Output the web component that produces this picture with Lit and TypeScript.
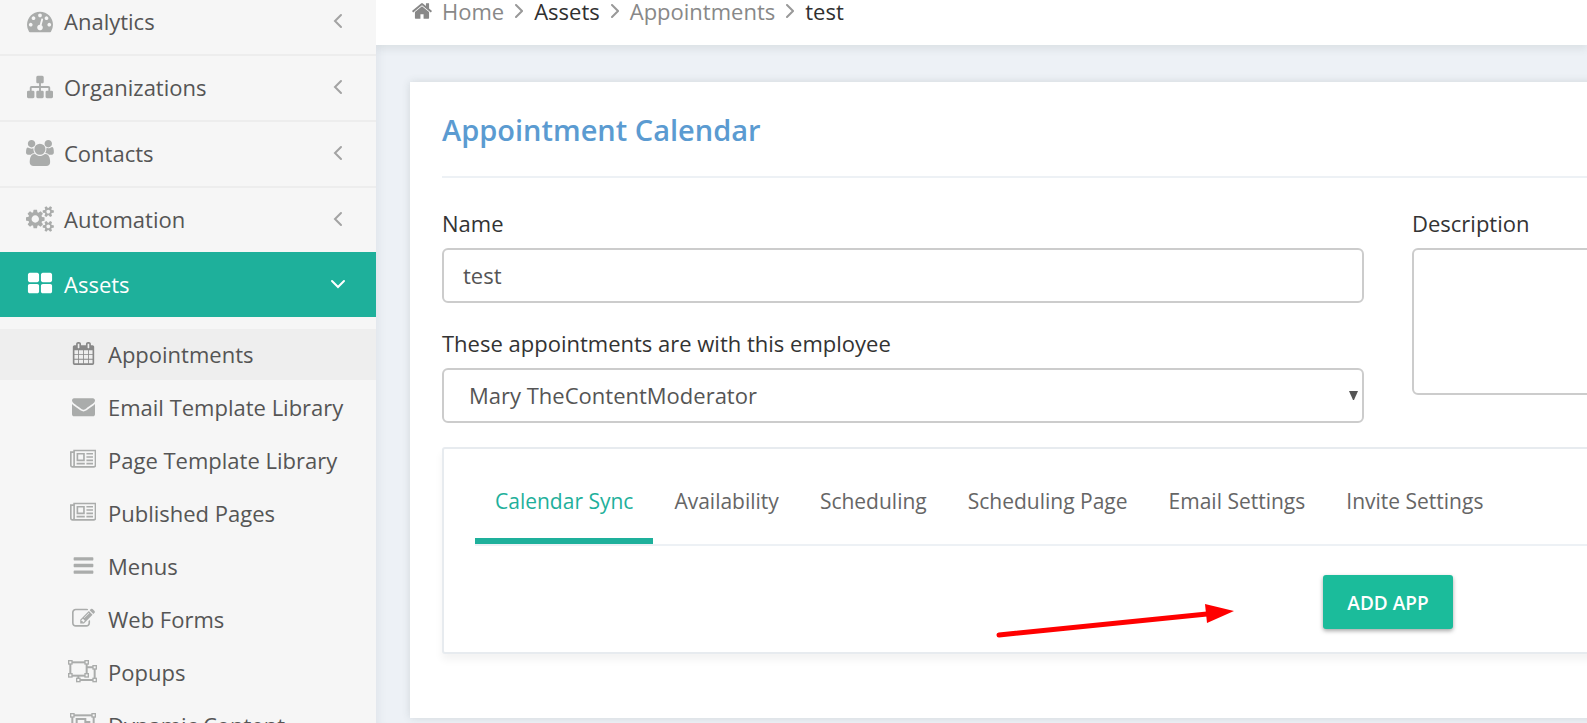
import { LitElement, html, svg, css, nothing, type SVGTemplateResult } from "lit";
import { customElement, property, state } from "lit/decorators.js";
import { classMap } from "lit/directives/class-map.js";

interface Glyph {
  width: number;
  height: number;
  size: number;
  body: SVGTemplateResult;
}

const solid = (size: number, d: string, unitsWide = 1792): Glyph => ({
  width: unitsWide,
  height: 1792,
  size,
  body: svg`<path fill="currentColor" fill-rule="nonzero" d=${d}></path>`,
});

const corner = (x: number, y: number) =>
  svg`<rect x=${x - 5} y=${y - 5} width="10" height="10" fill="#f6f6f6" stroke="currentColor" stroke-width="4"></rect>`;

const newspaper =
  "M1024 512h-384v384h384v-384zm128 640v128h-640v-128h640zm0-768v640h-640v-640h640zm640 768v128h-512v-128h512zm0-256v128h-512v-128h512zm0-256v128h-512v-128h512zm0-256v128h-512v-128h512zm-1536 960v-960h-128v960q0 26 19 45t45 19 45-19 19-45zm1664 0v-1088h-1536v1088q0 33-11 64h1483q26 0 45-19t19-45zm128-1216v1216q0 80-56 136t-136 56h-1664q-80 0-136-56t-56-136v-1088h256v-128h1792z";

const glyphs: Record<string, Glyph> = {
  home: solid(
    22,
    "M1472 992v480q0 26-19 45t-45 19h-384v-384h-256v384h-384q-26 0-45-19t-19-45v-480q0-1 .5-3t.5-3l575-474 575 474q1 2 1 6zm223-69l-62 74q-8 9-21 11h-3q-13 0-21-7l-692-577-692 577q-12 8-24 7-13-2-21-11l-62-74q-8-10-7-23.5t11-21.5l719-599q32-26 76-26t76 26l244 204v-195q0-14 9-23t23-9h192q14 0 23 9t9 23v408l219 182q10 8 11 21.5t-7 23.5z"
  ),
  gauge: solid(
    26,
    "M384 1152q0-53-37.5-90.5t-90.5-37.5-90.5 37.5-37.5 90.5 37.5 90.5 90.5 37.5 90.5-37.5 37.5-90.5zm192-448q0-53-37.5-90.5t-90.5-37.5-90.5 37.5-37.5 90.5 37.5 90.5 90.5 37.5 90.5-37.5 37.5-90.5zm428 481l101-382q6-26-7.5-48.5t-38.5-29.5-48 6.5-30 39.5l-101 382q-60 5-107 43.5t-63 98.5q-20 77 20 146t117 89 146-20 89-117q16-60-6-117t-72-91zm660-33q0-53-37.5-90.5t-90.5-37.5-90.5 37.5-37.5 90.5 37.5 90.5 90.5 37.5 90.5-37.5 37.5-90.5zm-640-640q0-53-37.5-90.5t-90.5-37.5-90.5 37.5-37.5 90.5 37.5 90.5 90.5 37.5 90.5-37.5 37.5-90.5zm448 192q0-53-37.5-90.5t-90.5-37.5-90.5 37.5-37.5 90.5 37.5 90.5 90.5 37.5 90.5-37.5 37.5-90.5zm320 448q0 261-141 483-19 29-54 29h-1402q-35 0-54-29-141-221-141-483 0-182 71-348t191-286 286-191 348-71 348 71 286 191 191 286 71 348z"
  ),
  sitemap: solid(
    26,
    "M1792 1248v320q0 40-28 68t-68 28h-320q-40 0-68-28t-28-68v-320q0-40 28-68t68-28h96v-192h-512v192h96q40 0 68 28t28 68v320q0 40-28 68t-68 28h-320q-40 0-68-28t-28-68v-320q0-40 28-68t68-28h96v-192h-512v192h96q40 0 68 28t28 68v320q0 40-28 68t-68 28h-320q-40 0-68-28t-28-68v-320q0-40 28-68t68-28h96v-192q0-52 38-90t90-38h512v-192h-96q-40 0-68-28t-28-68v-320q0-40 28-68t68-28h320q40 0 68 28t28 68v320q0 40-28 68t-68 28h-96v192h512q52 0 90 38t38 90v192h96q40 0 68 28t28 68z"
  ),
  people: solid(
    26,
    "M593 896q-162 5-265 128h-134q-82 0-138-40.5t-56-118.5q0-353 124-353 6 0 43.5 21t97.5 42.5 119 21.5q67 0 133-23-5 37-5 66 0 159 81 288zm1071 637q0 120-73 189.5t-194 69.5h-874q-121 0-194-69.5t-73-189.5q0-53 3.5-103.5t14-109 26.5-108.5 43-97.5 62-81 85.5-53.5 111.5-20q10 0 43 21.5t73 48 107 48 135 21.5 135-21.5 107-48 73-48 43-21.5q61 0 111.5 20t85.5 53.5 62 81 43 97.5 26.5 108.5 14 109 3.5 103.5zm-1024-1277q0 106-75 181t-181 75-181-75-75-181 75-181 181-75 181 75 75 181zm704 384q0 159-112.5 271.5t-271.5 112.5-271.5-112.5-112.5-271.5 112.5-271.5 271.5-112.5 271.5 112.5 112.5 271.5zm576 225q0 78-56 118.5t-138 40.5h-134q-103-123-265-128 81-129 81-288 0-29-5-66 66 23 133 23 59 0 119-21.5t97.5-42.5 43.5-21q124 0 124 353zm-128-609q0 106-75 181t-181 75-181-75-75-181 75-181 181-75 181 75 75 181z",
    1920
  ),
  cogs: solid(
    26,
    "M896 896q0-106-75-181t-181-75-181 75-75 181 75 181 181 75 181-75 75-181zm768 512q0-52-38-90t-90-38-90 38-38 90q0 53 37.5 90.5t90.5 37.5 90.5-37.5 37.5-90.5zm0-1024q0-52-38-90t-90-38-90 38-38 90q0 53 37.5 90.5t90.5 37.5 90.5-37.5 37.5-90.5zm-384 421v185q0 10-7 19.5t-16 10.5l-155 24q-11 35-32 76 34 48 90 115 7 11 7 20 0 12-7 19-23 30-82.5 89.5t-78.5 59.5q-11 0-21-7l-115-90q-37 19-77 31-11 108-23 155-7 24-30 24h-186q-11 0-20-7.5t-10-17.5l-23-153q-34-10-75-31l-118 89q-7 7-20 7-11 0-21-8-144-133-144-160 0-9 7-19 10-14 41-53t47-61q-23-44-35-82l-152-24q-10-1-17-9.5t-7-19.5v-185q0-10 7-19.5t16-10.5l155-24q11-35 32-76-34-48-90-115-7-11-7-20 0-12 7-20 22-30 82-89t79-59q11 0 21 7l115 90q34-18 77-32 11-108 23-154 7-24 30-24h186q11 0 20 7.5t10 17.5l23 153q34 10 75 31l118-89q8-7 20-7 11 0 21 8 144 133 144 160 0 8-7 19-12 16-42 54t-45 60q23 48 34 82l152 23q10 2 17 10.5t7 19.5zm640 533v140q0 16-149 31-12 27-30 52 51 113 51 138 0 4-4 7-122 71-124 71-8 0-46-47t-52-68q-20 2-30 2t-30-2q-14 21-52 68t-46 47q-2 0-124-71-4-3-4-7 0-25 51-138-18-25-30-52-149-15-149-31v-140q0-16 149-31 13-29 30-52-51-113-51-138 0-4 4-7 4-2 35-20t59-34 30-16q8 0 46 46.5t52 67.5q20-2 30-2t30 2q51-71 92-112l6-2q4 0 124 70 4 3 4 7 0 25-51 138 17 23 30 52 149 15 149 31zm0-1024v140q0 16-149 31-12 27-30 52 51 113 51 138 0 4-4 7-122 71-124 71-8 0-46-47t-52-68q-20 2-30 2t-30-2q-14 21-52 68t-46 47q-2 0-124-71-4-3-4-7 0-25 51-138-18-25-30-52-149-15-149-31v-140q0-16 149-31 13-29 30-52-51-113-51-138 0-4 4-7 4-2 35-20t59-34 30-16q8 0 46 46.5t52 67.5q20-2 30-2t30 2q51-71 92-112l6-2q4 0 124 70 4 3 4 7 0 25-51 138 17 23 30 52 149 15 149 31z",
    1920
  ),
  grid: solid(
    26,
    "M832 1024v384q0 52-38 90t-90 38h-512q-52 0-90-38t-38-90v-384q0-52 38-90t90-38h512q52 0 90 38t38 90zm0-768v384q0 52-38 90t-90 38h-512q-52 0-90-38t-38-90v-384q0-52 38-90t90-38h512q52 0 90 38t38 90zm896 768v384q0 52-38 90t-90 38h-512q-52 0-90-38t-38-90v-384q0-52 38-90t90-38h512q52 0 90 38t38 90zm0-768v384q0 52-38 90t-90 38h-512q-52 0-90-38t-38-90v-384q0-52 38-90t90-38h512q52 0 90 38t38 90z"
  ),
  calendar: solid(
    23,
    "M192 1664h288v-288h-288v288zm352 0h320v-288h-320v288zm-352-352h288v-320h-288v320zm352 0h320v-320h-320v320zm-352-384h288v-288h-288v288zm736 736h320v-288h-320v288zm-384-736h320v-288h-320v288zm768 736h288v-288h-288v288zm-384-352h320v-320h-320v320zm-352-864v-288q0-13-9.5-22.5t-22.5-9.5h-64q-13 0-22.5 9.5t-9.5 22.5v288q0 13 9.5 22.5t22.5 9.5h64q13 0 22.5-9.5t9.5-22.5zm736 864h288v-320h-288v320zm-384-384h320v-288h-320v288zm384 0h288v-288h-288v288zm32-480v-288q0-13-9.5-22.5t-22.5-9.5h-64q-13 0-22.5 9.5t-9.5 22.5v288q0 13 9.5 22.5t22.5 9.5h64q13 0 22.5-9.5t9.5-22.5zm384-64v1280q0 52-38 90t-90 38h-1408q-52 0-90-38t-38-90v-1280q0-52 38-90t90-38h128v-96q0-66 47-113t113-47h64q66 0 113 47t47 113v96h384v-96q0-66 47-113t113-47h64q66 0 113 47t47 113v96h128q52 0 90 38t38 90z"
  ),
  envelope: solid(
    23,
    "M1792 710v794q0 66-47 113t-113 47h-1472q-66 0-113-47t-47-113v-794q44 49 101 87 362 246 497 345 57 42 92.5 65.5t94.5 48 110 24.5h2q51 0 110-24.5t94.5-48 92.5-65.5q170-123 498-345 57-39 100-87zm0-294q0 79-49 151t-122 123q-376 261-468 325-10 7-42.5 31t-54 38-52 31.5-57.5 27-50 9h-2q-23 0-50-9t-57.5-27-52-31.5-54-38-42.5-31q-91-64-262-182.5t-205-142.5q-62-42-117-115.5t-55-136.5q0-78 41.5-130t118.5-52h1472q65 0 112.5 47t47.5 113z"
  ),
  newspaper: solid(23, newspaper, 2048),
  bars: solid(
    23,
    "M1664 1344v128q0 26-19 45t-45 19h-1408q-26 0-45-19t-19-45v-128q0-26 19-45t45-19h1408q26 0 45 19t19 45zm0-512v128q0 26-19 45t-45 19h-1408q-26 0-45-19t-19-45v-128q0-26 19-45t45-19h1408q26 0 45 19t19 45zm0-512v128q0 26-19 45t-45 19h-1408q-26 0-45-19t-19-45v-128q0-26 19-45t45-19h1408q26 0 45 19t19 45z"
  ),
  edit: solid(
    23,
    "M888 1184l116-116-152-152-116 116v56h96v96h56zm440-720q-16-16-33 1l-350 350q-17 17-1 33t33-1l350-350q17-17 1-33zm80 594v190q0 119-84.5 203.5t-203.5 84.5h-832q-119 0-203.5-84.5t-84.5-203.5v-832q0-119 84.5-203.5t203.5-84.5h832q63 0 117 25 15 7 18 23 3 17-9 29l-49 49q-14 14-32 8-23-6-45-6h-832q-66 0-113 47t-47 113v832q0 66 47 113t113 47h832q66 0 113-47t47-113v-126q0-13 9-22l64-64q15-15 35-7t20 29zm-96-738l288 288-672 672h-288v-288zm444 132l-92 92-288-288 92-92q28-28 68-28t68 28l152 152q28 28 28 68t-28 68z"
  ),
  ungroup: {
    width: 88,
    height: 69,
    size: 23,
    body: svg`
      <g fill="none" stroke="currentColor" stroke-width="6">
        <path d="M56 22H80V60H31V46"></path>
        <rect x="7" y="7" width="49" height="40"></rect>
      </g>
      ${corner(7, 7)}${corner(56, 7)}${corner(7, 46)}${corner(56, 46)}
      ${corner(80, 22)}${corner(80, 60)}${corner(31, 60)}`,
  },
  group: {
    width: 78,
    height: 69,
    size: 23,
    body: svg`
      <g fill="none" stroke="currentColor" stroke-width="6">
        <rect x="7" y="7" width="64" height="55"></rect>
        <rect x="20" y="18" width="26" height="22"></rect>
        <path d="M46 27H58V51H31V40"></path>
      </g>
      ${corner(7, 7)}${corner(71, 7)}${corner(7, 62)}${corner(71, 62)}`,
  },
  left: {
    width: 10,
    height: 16,
    size: 16,
    body: svg`<path d="M8 2L2 8L8 14" fill="none" stroke="currentColor" stroke-width="2" stroke-linecap="round"></path>`,
  },
  right: {
    width: 8,
    height: 14,
    size: 14,
    body: svg`<path d="M1 1L7 7L1 13" fill="none" stroke="currentColor" stroke-width="2" stroke-linecap="round"></path>`,
  },
  down: {
    width: 16,
    height: 10,
    size: 10,
    body: svg`<path d="M2 2L8 8L14 2" fill="none" stroke="currentColor" stroke-width="2" stroke-linecap="round"></path>`,
  },
};

const icon = (name: string) => {
  const g = glyphs[name];
  return html`<svg
    class="glyph"
    viewBox="0 0 ${g.width} ${g.height}"
    width=${(g.size * g.width) / g.height}
    height=${g.size}
    aria-hidden="true"
  >${g.body}</svg>`;
};

@customElement("side-nav")
class SideNav extends LitElement {
  static styles = css`
    :host {
      display: block;
      flex: none;
      width: 376px;
      background: #f6f6f6;
      color: #555;
      font-size: 22px;
      line-height: 32px;
    }
    ul {
      list-style: none;
      margin: 0;
      padding: 0;
    }
    .top {
      margin-top: -12px;
    }
    a {
      display: flex;
      align-items: center;
      gap: 10px;
      box-sizing: border-box;
      color: inherit;
      text-decoration: none;
      white-space: nowrap;
    }
    .glyph {
      display: block;
      flex: none;
    }
    .mark {
      display: flex;
      flex: none;
      justify-content: center;
      width: 28px;
      color: #aaacab;
    }
    .section {
      height: 66px;
      padding: 0 32px 2px 26px;
      border-top: 2px solid #ededed;
    }
    .label {
      flex: 1;
    }
    .toggle {
      display: flex;
      justify-content: center;
      width: 16px;
      margin-right: -2px;
      color: #a3a3a3;
    }
    .section.open {
      height: 65px;
      border: 0;
      background: #1eb09b;
      color: #fff;
    }
    .open .mark,
    .open .toggle {
      color: #fff;
    }
    .sub {
      display: grid;
      gap: 2px;
      padding-top: 12px;
    }
    .item {
      height: 51px;
      padding: 0 0 2px 68px;
    }
    .item .mark {
      width: 30px;
    }
    .item.current {
      background: #eee;
    }
    .item.current .mark {
      color: #888;
    }
  `;

  private sections = [
    { label: "Analytics", icon: "gauge" },
    { label: "Organizations", icon: "sitemap" },
    { label: "Contacts", icon: "people" },
    { label: "Automation", icon: "cogs" },
    {
      label: "Assets",
      icon: "grid",
      items: [
        { label: "Appointments", icon: "calendar" },
        { label: "Email Template Library", icon: "envelope" },
        { label: "Page Template Library", icon: "newspaper" },
        { label: "Published Pages", icon: "newspaper" },
        { label: "Menus", icon: "bars" },
        { label: "Web Forms", icon: "edit" },
        { label: "Popups", icon: "ungroup" },
        { label: "Dynamic Content", icon: "group" },
      ],
    },
  ];

  render() {
    return html`<nav>
      <ul class="top">
        ${this.sections.map(
          (s) => html`<li>
            <a href="#" class=${classMap({ section: true, open: !!s.items })}>
              <span class="mark">${icon(s.icon)}</span>
              <span class="label">${s.label}</span>
              <span class="toggle">${icon(s.items ? "down" : "left")}</span>
            </a>
            ${s.items
              ? html`<ul class="sub">
                  ${s.items.map(
                    (i, n) => html`<li>
                      <a href="#" class=${classMap({ item: true, current: n === 0 })}>
                        <span class="mark">${icon(i.icon)}</span>${i.label}
                      </a>
                    </li>`
                  )}
                </ul>`
              : nothing}
          </li>`
        )}
      </ul>
    </nav>`;
  }
}

@customElement("calendar-tabs")
class CalendarTabs extends LitElement {
  static styles = css`
    :host {
      display: block;
      box-sizing: border-box;
      padding: 30px 31px 23px;
      border: 2px solid #e7ebef;
      border-radius: 3px;
      background: #fff;
      box-shadow: 0 6px 8px rgba(0, 0, 0, 0.05);
    }
    .tabs {
      display: flex;
      gap: 1px;
      border-bottom: 2px solid #edf1f5;
    }
    button {
      font: inherit;
      cursor: pointer;
    }
    .tab {
      padding: 8px 20px 22px;
      border: 0;
      border-bottom: 6px solid transparent;
      background: none;
      color: #666;
      font-size: 21px;
      line-height: 29px;
      white-space: nowrap;
    }
    .tab.active {
      border-color: #1eb09b;
      color: #1eb09b;
    }
    .panel {
      position: relative;
      display: flex;
      justify-content: center;
      padding-top: 29px;
    }
    .add {
      height: 54px;
      padding: 2px 24px 0;
      border: 0;
      border-radius: 3px;
      background: #1bbc9b;
      box-shadow: 0 2px 4px rgba(0, 0, 0, 0.35);
      color: #fff;
      font-size: 19px;
      font-weight: 600;
      line-height: 26px;
    }
    .pointer {
      position: absolute;
      top: 56px;
      right: calc(50% + 153px);
    }
  `;

  @property({ attribute: false }) tabs: string[] = [];
  @state() private active = 0;

  render() {
    return html`
      <div class="tabs" role="tablist">
        ${this.tabs.map(
          (t, n) => html`<button
            type="button"
            role="tab"
            aria-selected=${n === this.active}
            class=${classMap({ tab: true, active: n === this.active })}
            @click=${() => (this.active = n)}
          >${t}</button>`
        )}
      </div>
      <div class="panel" role="tabpanel">
        <svg class="pointer" width="240" height="38" viewBox="0 0 240 38" aria-hidden="true">
          <path d="M4 33L212 12" stroke="#f00" stroke-width="5" stroke-linecap="round"></path>
          <path d="M210 2L239 9L212 21Z" fill="#f00"></path>
        </svg>
        <button type="button" class="add">ADD APP</button>
      </div>
    `;
  }
}

@customElement("app-root")
class AppRoot extends LitElement {
  static styles = css`
    :host {
      display: flex;
      height: 100vh;
      overflow: hidden;
      background: #edf1f6;
      color: #333;
      font-family: "Open Sans", "Noto Sans", sans-serif;
      font-size: 22px;
      line-height: 30px;
    }
    main {
      flex: 1;
      min-width: 0;
      overflow: hidden;
      box-shadow: inset 10px 0 10px -8px rgba(60, 80, 90, 0.08);
    }
    .crumbs {
      display: flex;
      align-items: flex-start;
      box-sizing: border-box;
      height: 45px;
      padding: 0 35px;
      background: #fff;
      box-shadow: 0 4px 8px rgba(60, 80, 80, 0.1);
      line-height: 20px;
    }
    .crumbs ol {
      display: flex;
      align-items: center;
      gap: 11px;
      margin: 0;
      padding: 0;
      list-style: none;
    }
    .crumbs li {
      display: flex;
      align-items: center;
      gap: 11px;
      height: 22px;
      color: #303030;
    }
    .crumbs a {
      display: flex;
      align-items: center;
      gap: 9px;
      color: #888;
      text-decoration: none;
    }
    .glyph {
      display: block;
      flex: none;
    }
    .sep {
      display: flex;
      color: #999;
    }
    .card {
      min-width: 1892px;
      margin: 37px 34px 0;
      padding: 30px 32px 64px;
      background: #fff;
      box-shadow: 0 0 8px rgba(60, 80, 80, 0.16);
    }
    h1 {
      margin: 0 0 30px;
      padding-bottom: 28px;
      border-bottom: 2px solid #edf1f5;
      color: #5b9bd1;
      font-size: 29px;
      font-weight: 600;
      line-height: 36px;
    }
    .fields {
      display: grid;
      grid-template-columns: 1fr 1fr;
      gap: 48px;
      margin-bottom: 24px;
    }
    .column {
      display: flex;
      flex-direction: column;
      gap: 25px;
    }
    .field {
      display: flex;
      flex-direction: column;
      gap: 10px;
    }
    .control {
      box-sizing: border-box;
      width: 100%;
      height: 55px;
      margin: 0;
      padding: 0 19px 2px;
      border: 2px solid #ccc;
      border-radius: 6px;
      background: #fff;
      color: #555;
      font: inherit;
    }
    .pick {
      position: relative;
    }
    select.control {
      display: block;
      padding: 0 25px 2px;
      appearance: none;
    }
    textarea.control {
      height: 147px;
      resize: none;
    }
    .caret {
      position: absolute;
      top: 23px;
      right: 6px;
      pointer-events: none;
    }
  `;

  private tabs = [
    "Calendar Sync",
    "Availability",
    "Scheduling",
    "Scheduling Page",
    "Email Settings",
    "Invite Settings",
  ];

  render() {
    const sep = html`<span class="sep">${icon("right")}</span>`;
    return html`
      <side-nav></side-nav>
      <main>
        <nav class="crumbs" aria-label="Breadcrumb">
          <ol>
            <li><a href="#">${icon("home")}Home</a>${sep}</li>
            <li>Assets${sep}</li>
            <li><a href="#">Appointments</a>${sep}</li>
            <li>test</li>
          </ol>
        </nav>
        <section class="card">
          <h1>Appointment Calendar</h1>
          <form class="fields">
            <div class="column">
              <div class="field">
                <label for="name">Name</label>
                <input class="control" id="name" type="text" value="test" />
              </div>
              <div class="field">
                <label for="employee">These appointments are with this employee</label>
                <div class="pick">
                  <select class="control" id="employee">
                    <option>Mary TheContentModerator</option>
                  </select>
                  <svg class="caret" width="9" height="9" viewBox="0 0 9 9" aria-hidden="true">
                    <path d="M0 0H9L5 9H4Z" fill="#555"></path>
                  </svg>
                </div>
              </div>
            </div>
            <div class="column">
              <div class="field">
                <label for="description">Description</label>
                <textarea class="control" id="description"></textarea>
              </div>
            </div>
          </form>
          <calendar-tabs .tabs=${this.tabs}></calendar-tabs>
        </section>
      </main>
    `;
  }
}
